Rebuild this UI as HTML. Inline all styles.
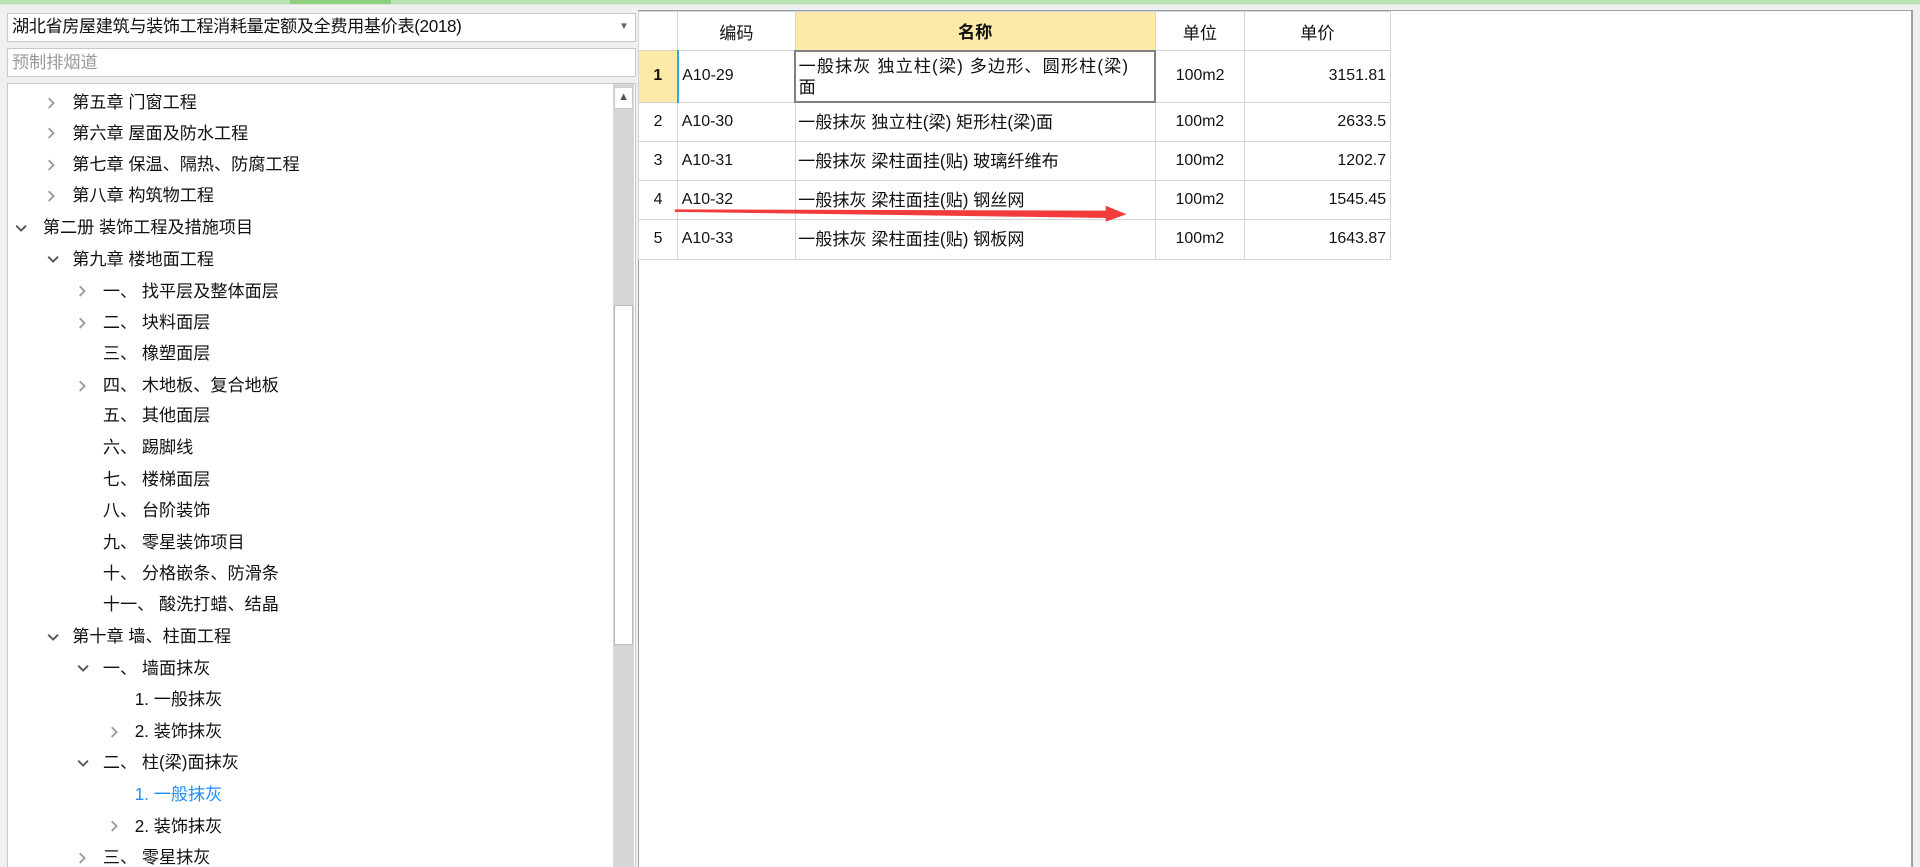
<!DOCTYPE html>
<html><head><meta charset="utf-8"><style>
html,body{margin:0;padding:0;width:1920px;height:867px;overflow:hidden;background:#f0f0f0}
#w{zoom:1.22449;width:1568px;height:708px;position:relative;font-family:"Liberation Sans","Noto Sans CJK SC",sans-serif;font-size:14px;color:#111}
.a{position:absolute}
.top{left:0;top:0;width:1568px;height:3px;background:#b9e3b0;border-bottom:1px solid #dfe9dc}
.box{background:#fff;border:1px solid #c8c8c8;box-sizing:border-box}
.ti{position:absolute;white-space:nowrap;height:26px;line-height:26px}
.r{position:absolute}
table{border-collapse:collapse;position:absolute;left:521px;top:9px;font-size:13px;table-layout:fixed;width:614px}
td{border:1px solid #d4d4d4;padding:0 3px;white-space:nowrap;box-sizing:border-box;vertical-align:middle;line-height:17px;overflow:hidden}
th{border:1px solid #d4d4d4;font-weight:normal;font-size:14px;height:29px}
</style></head><body><div id="w">
<svg width="0" height="0" style="position:absolute"><defs>
<symbol id="r" viewBox="0 0 10 10"><polyline points="3,1 7,5 3,9" fill="none" stroke="#999" stroke-width="1.5"/></symbol>
<symbol id="d" viewBox="0 0 10 10"><polyline points="1,3 5,7 9,3" fill="none" stroke="#555" stroke-width="1.5"/></symbol>
</defs></svg>
<div class="a top"></div>
<div class="a" style="left:237px;top:0;width:82px;height:3px;background:#8fd07f"></div>
<div class="a box" style="left:6px;top:11px;width:513px;height:23px;line-height:21px;padding-left:3px;font-size:14px;letter-spacing:-0.3px">湖北省房屋建筑与装饰工程消耗量定额及全费用基价表(2018)<span style="position:absolute;right:5px;top:0;font-size:8px;color:#666">▼</span></div>
<div class="a box" style="left:6px;top:39px;width:513px;height:24px;line-height:22px;padding-left:3px;color:#999">预制排烟道</div>
<div class="a box" style="left:6px;top:68px;width:513px;height:650px;overflow:hidden">
<div class="a" style="left:494px;top:0;width:17px;height:650px;background:#d6d6d6"></div>
<div class="a" style="left:495px;top:2px;width:15px;height:18px;background:#fff;border:1px solid #ccc;box-sizing:border-box;font-size:9px;text-align:center;line-height:16px;color:#555">▲</div>
<div class="a" style="left:495px;top:180px;width:15px;height:278px;background:#fff;border:1px solid #bbb;box-sizing:border-box"></div>
</div>
<div class="a" style="left:0;top:0">
<svg class="r" style="left:37px;top:79px" width="10" height="10"><use href="#r"/></svg><span class="ti" style="left:59px;top:71px">第五章 门窗工程</span>
<svg class="r" style="left:37px;top:104px" width="10" height="10"><use href="#r"/></svg><span class="ti" style="left:59px;top:96px">第六章 屋面及防水工程</span>
<svg class="r" style="left:37px;top:130px" width="10" height="10"><use href="#r"/></svg><span class="ti" style="left:59px;top:122px">第七章 保温、隔热、防腐工程</span>
<svg class="r" style="left:37px;top:155px" width="10" height="10"><use href="#r"/></svg><span class="ti" style="left:59px;top:147px">第八章 构筑物工程</span>
<svg class="r" style="left:12px;top:181px" width="10" height="10"><use href="#d"/></svg><span class="ti" style="left:35px;top:173px">第二册 装饰工程及措施项目</span>
<svg class="r" style="left:38px;top:207px" width="10" height="10"><use href="#d"/></svg><span class="ti" style="left:59px;top:199px">第九章 楼地面工程</span>
<svg class="r" style="left:62px;top:233px" width="10" height="10"><use href="#r"/></svg><span class="ti" style="left:84px;top:225px">一、 找平层及整体面层</span>
<svg class="r" style="left:62px;top:259px" width="10" height="10"><use href="#r"/></svg><span class="ti" style="left:84px;top:251px">二、 块料面层</span>
<span class="ti" style="left:84px;top:276px">三、 橡塑面层</span>
<svg class="r" style="left:62px;top:310px" width="10" height="10"><use href="#r"/></svg><span class="ti" style="left:84px;top:302px">四、 木地板、复合地板</span>
<span class="ti" style="left:84px;top:327px">五、 其他面层</span>
<span class="ti" style="left:84px;top:353px">六、 踢脚线</span>
<span class="ti" style="left:84px;top:379px">七、 楼梯面层</span>
<span class="ti" style="left:84px;top:404px">八、 台阶装饰</span>
<span class="ti" style="left:84px;top:430px">九、 零星装饰项目</span>
<span class="ti" style="left:84px;top:456px">十、 分格嵌条、防滑条</span>
<span class="ti" style="left:84px;top:481px">十一、 酸洗打蜡、结晶</span>
<svg class="r" style="left:38px;top:515px" width="10" height="10"><use href="#d"/></svg><span class="ti" style="left:59px;top:507px">第十章 墙、柱面工程</span>
<svg class="r" style="left:63px;top:541px" width="10" height="10"><use href="#d"/></svg><span class="ti" style="left:84px;top:533px">一、 墙面抹灰</span>
<span class="ti" style="left:110px;top:559px">1. 一般抹灰</span>
<svg class="r" style="left:88px;top:593px" width="10" height="10"><use href="#r"/></svg><span class="ti" style="left:110px;top:585px">2. 装饰抹灰</span>
<svg class="r" style="left:63px;top:618px" width="10" height="10"><use href="#d"/></svg><span class="ti" style="left:84px;top:610px">二、 柱(梁)面抹灰</span>
<span class="ti" style="left:110px;top:636px;color:#1e90ff">1. 一般抹灰</span>
<svg class="r" style="left:88px;top:670px" width="10" height="10"><use href="#r"/></svg><span class="ti" style="left:110px;top:662px">2. 装饰抹灰</span>
<svg class="r" style="left:62px;top:696px" width="10" height="10"><use href="#r"/></svg><span class="ti" style="left:84px;top:688px">三、 零星抹灰</span>
</div>
<div class="a" style="left:521px;top:8px;width:1041px;height:710px;background:#fff;border:1px solid #9aa0a8;border-width:1px 2px 0 1px;box-sizing:border-box"></div>
<table>
<colgroup><col style="width:32px"><col style="width:96px"><col style="width:294px"><col style="width:73px"><col style="width:119px"></colgroup>
<tr><th></th><th>编码</th><th style="background:#fde9a8;font-weight:bold">名称</th><th>单位</th><th>单价</th></tr>
<tr style="height:42px"><td style="background:#fde9a8;text-align:center;font-weight:bold;border-right:2px solid #3aa0e0">1</td><td>A10-29</td><td style="border:2px solid #808080;padding:0 2px;font-size:14px;letter-spacing:0.9px">一般抹灰 独立柱(梁) 多边形、圆形柱(梁)<br>面</td><td style="text-align:center">100m2</td><td style="text-align:right">3151.81</td></tr>
<tr style="height:32px"><td style="text-align:center">2</td><td>A10-30</td><td style="font-size:14px;padding:0 2px">一般抹灰 独立柱(梁) 矩形柱(梁)面</td><td style="text-align:center">100m2</td><td style="text-align:right">2633.5</td></tr>
<tr style="height:32px"><td style="text-align:center">3</td><td>A10-31</td><td style="font-size:14px;padding:0 2px">一般抹灰 梁柱面挂(贴) 玻璃纤维布</td><td style="text-align:center">100m2</td><td style="text-align:right">1202.7</td></tr>
<tr style="height:32px"><td style="text-align:center">4</td><td>A10-32</td><td style="font-size:14px;padding:0 2px">一般抹灰 梁柱面挂(贴) 钢丝网</td><td style="text-align:center">100m2</td><td style="text-align:right">1545.45</td></tr>
<tr style="height:32px"><td style="text-align:center">5</td><td>A10-33</td><td style="font-size:14px;padding:0 2px">一般抹灰 梁柱面挂(贴) 钢板网</td><td style="text-align:center">100m2</td><td style="text-align:right">1643.87</td></tr>
</table>
<svg class="a" style="left:0;top:0" width="1568" height="708"><polygon points="551,171 903,172 903,168 920,175 903,181 903,178 551,173" fill="#f23c3c"/></svg>
</div></body></html>
